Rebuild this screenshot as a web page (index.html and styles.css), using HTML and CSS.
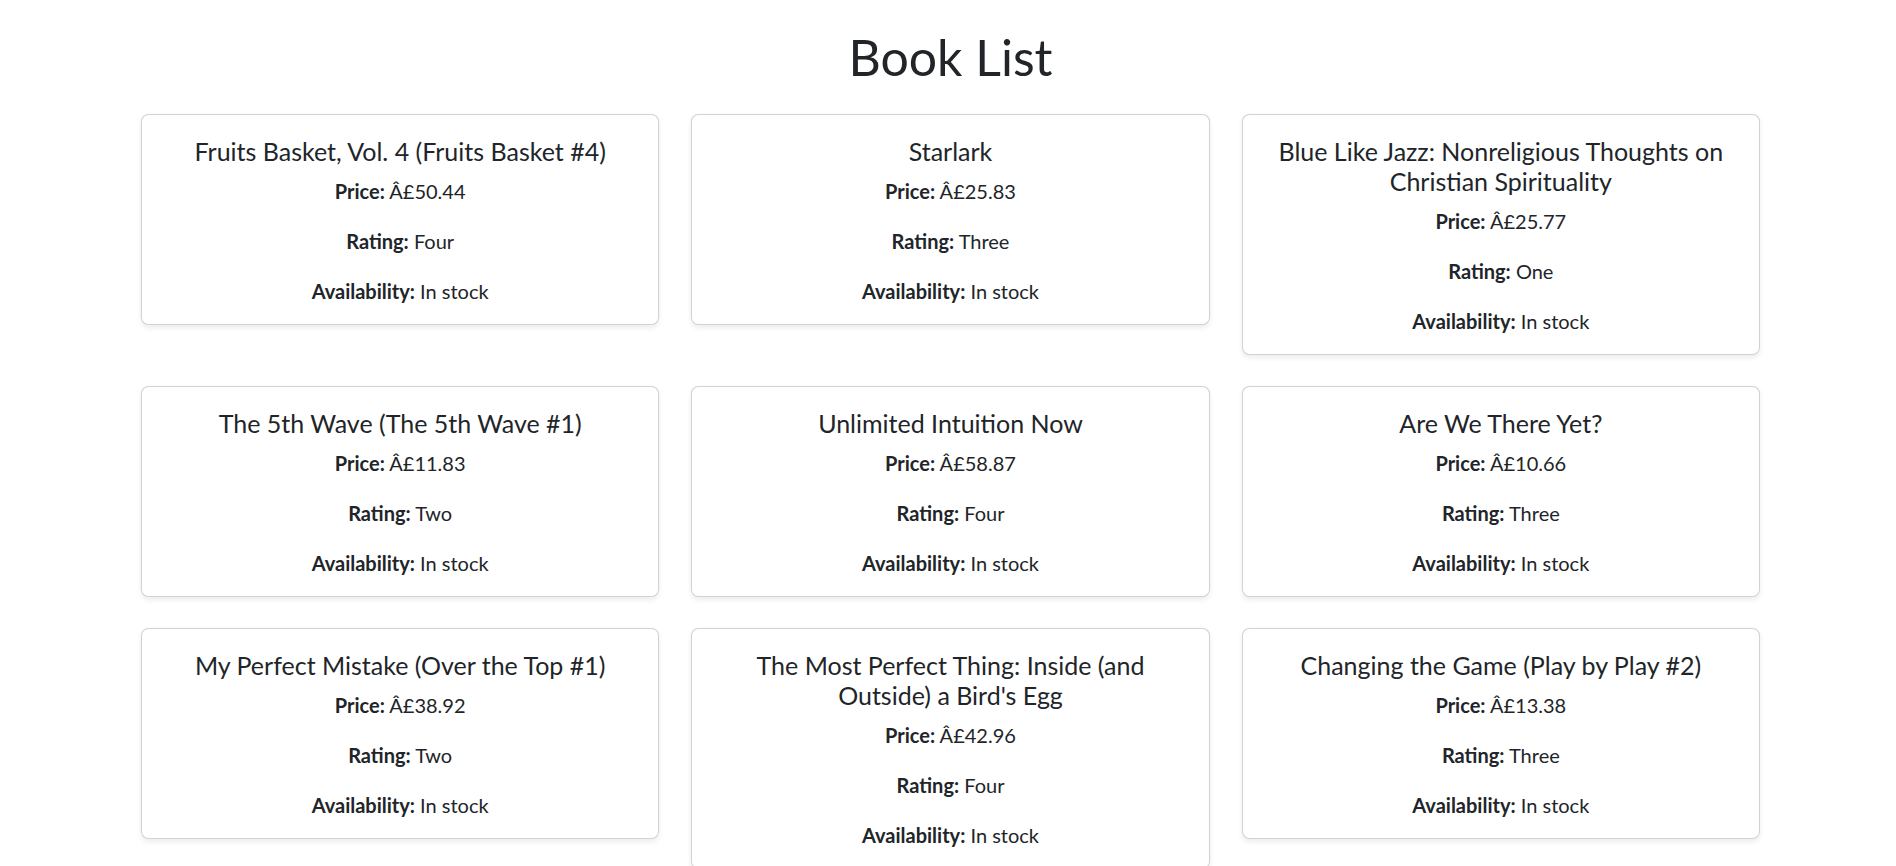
FILE: index.html
```html
<!DOCTYPE html>
<html lang="en">
<head>
<meta charset="utf-8">
<title>Book List</title>
<link rel="stylesheet" href="styles.css">
</head>
<body>
<main class="container">
  <h1 class="page-title">Book List</h1>
  <div class="book-grid">
    <div class="card">
      <h5 class="card-title">Fruits Basket, Vol. 4 (Fruits Basket #4)</h5>
      <p class="card-text"><strong>Price:</strong> Â£50.44</p>
      <p class="card-text"><strong>Rating:</strong> Four</p>
      <p class="card-text"><strong>Availability:</strong> In stock</p>
    </div>
    <div class="card">
      <h5 class="card-title">Starlark</h5>
      <p class="card-text"><strong>Price:</strong> Â£25.83</p>
      <p class="card-text"><strong>Rating:</strong> Three</p>
      <p class="card-text"><strong>Availability:</strong> In stock</p>
    </div>
    <div class="card">
      <h5 class="card-title">Blue Like Jazz: Nonreligious Thoughts on Christian Spirituality</h5>
      <p class="card-text"><strong>Price:</strong> Â£25.77</p>
      <p class="card-text"><strong>Rating:</strong> One</p>
      <p class="card-text"><strong>Availability:</strong> In stock</p>
    </div>
    <div class="card">
      <h5 class="card-title">The 5th Wave (The 5th Wave #1)</h5>
      <p class="card-text"><strong>Price:</strong> Â£11.83</p>
      <p class="card-text"><strong>Rating:</strong> Two</p>
      <p class="card-text"><strong>Availability:</strong> In stock</p>
    </div>
    <div class="card">
      <h5 class="card-title">Unlimited Intuition Now</h5>
      <p class="card-text"><strong>Price:</strong> Â£58.87</p>
      <p class="card-text"><strong>Rating:</strong> Four</p>
      <p class="card-text"><strong>Availability:</strong> In stock</p>
    </div>
    <div class="card">
      <h5 class="card-title">Are We There Yet?</h5>
      <p class="card-text"><strong>Price:</strong> Â£10.66</p>
      <p class="card-text"><strong>Rating:</strong> Three</p>
      <p class="card-text"><strong>Availability:</strong> In stock</p>
    </div>
    <div class="card">
      <h5 class="card-title">My Perfect Mistake (Over the Top #1)</h5>
      <p class="card-text"><strong>Price:</strong> Â£38.92</p>
      <p class="card-text"><strong>Rating:</strong> Two</p>
      <p class="card-text"><strong>Availability:</strong> In stock</p>
    </div>
    <div class="card">
      <h5 class="card-title">The Most Perfect Thing: Inside (and Outside) a Bird's Egg</h5>
      <p class="card-text"><strong>Price:</strong> Â£42.96</p>
      <p class="card-text"><strong>Rating:</strong> Four</p>
      <p class="card-text"><strong>Availability:</strong> In stock</p>
    </div>
    <div class="card">
      <h5 class="card-title">Changing the Game (Play by Play #2)</h5>
      <p class="card-text"><strong>Price:</strong> Â£13.38</p>
      <p class="card-text"><strong>Rating:</strong> Three</p>
      <p class="card-text"><strong>Availability:</strong> In stock</p>
    </div>
  </div>
</main>
</body>
</html>
```

FILE: styles.css
```css
* { box-sizing: border-box; }

html, body {
  margin: 0;
  padding: 0;
  background: #fff;
}

body {
  font-family: "Lato", "Noto Sans", sans-serif;
  font-size: 20px;
  line-height: 1.5;
  color: #212529;
}

.container {
  width: 1619px;
  margin-left: 141px;
}

.page-title {
  margin: 27px 0 27px;
  font-size: 50px;
  font-weight: 400;
  line-height: 1.2;
  text-align: center;
}

.book-grid {
  display: grid;
  grid-template-columns: repeat(3, 1fr);
  column-gap: 32px;
  row-gap: 31px;
  align-items: start;
}

.card {
  border: 1px solid rgba(0, 0, 0, 0.175);
  border-radius: 7.5px;
  background: #fff;
  box-shadow: 0 2.5px 5px rgba(0, 0, 0, 0.075);
  padding: 21px 20px 18px;
  text-align: center;
}

.card-title {
  margin: 0 0 10px;
  font-size: 25px;
  font-weight: 400;
  line-height: 1.2;
}

.card-text {
  margin: 0 0 20px;
}

.card-text:last-child {
  margin-bottom: 0;
}

.card-text strong {
  font-weight: 700;
}
```
